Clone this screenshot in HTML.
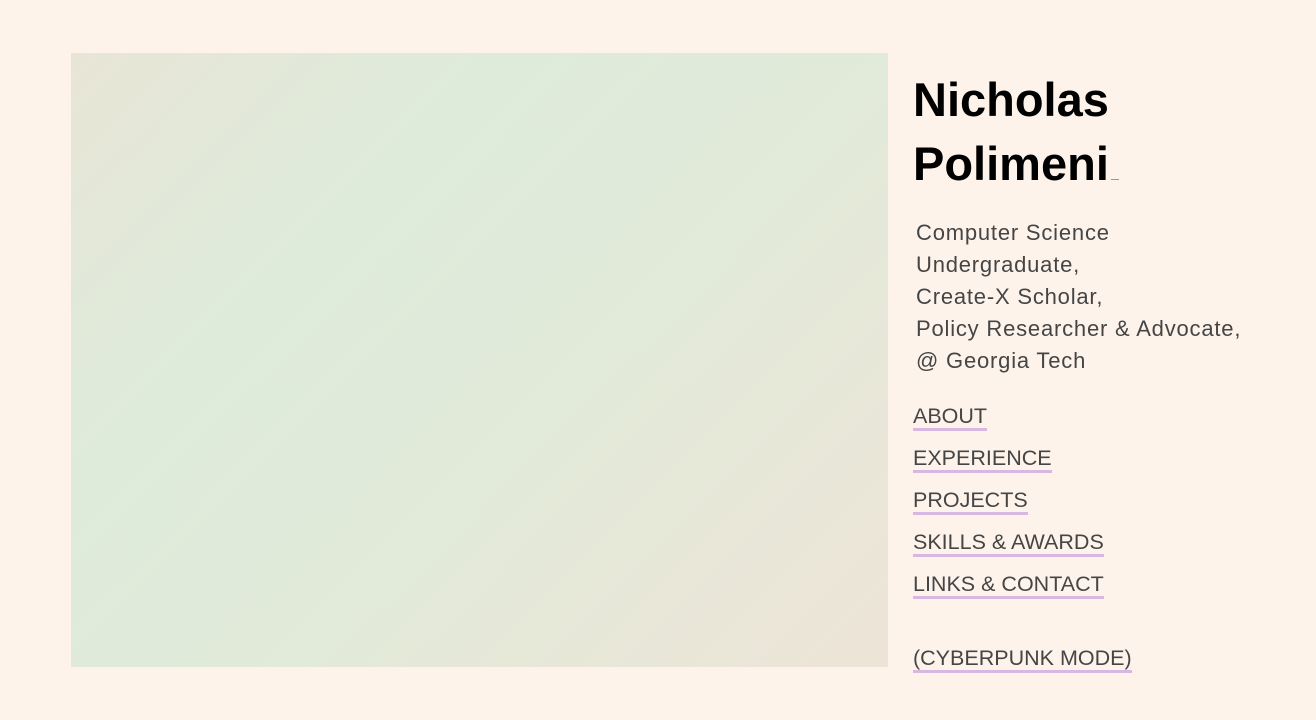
<!DOCTYPE html>
<html><head><meta charset="utf-8"><style>
html,body{margin:0;padding:0;}
body{width:1316px;height:720px;background:#fdf3eb;position:relative;overflow:hidden;font-family:"Liberation Sans",sans-serif;}
.img{position:absolute;left:71px;top:53px;width:817px;height:614px;background:linear-gradient(135deg,#e8e5d6 0%,#deebdb 30%,#e1ead9 55%,#ede4d7 100%);}
h1{position:absolute;left:913px;top:68px;margin:0;font-size:47px;line-height:64px;font-weight:bold;color:#000;}
h1 span{display:inline-block;width:8px;height:1px;background:#999;vertical-align:baseline;margin-left:2px}
.sub{position:absolute;left:916px;top:217px;font-size:22px;line-height:32px;color:#454545;letter-spacing:0.8px}
.nav a{position:absolute;left:913px;font-size:21.5px;line-height:24px;color:#454545;text-decoration:none;border-bottom:3px solid #d8b8e2;}
</style></head><body>
<div class="img"></div>
<h1>Nicholas<br>Polimeni<span></span></h1>
<div class="sub">Computer Science<br>Undergraduate,<br>Create-X Scholar,<br>Policy Researcher &amp; Advocate,<br>@ Georgia Tech</div>
<div class="nav">
<a style="top:404px">ABOUT</a>
<a style="top:446px">EXPERIENCE</a>
<a style="top:488px">PROJECTS</a>
<a style="top:530px">SKILLS &amp; AWARDS</a>
<a style="top:572px">LINKS &amp; CONTACT</a>
<a style="top:646px">(CYBERPUNK MODE)</a>
</div>
</body></html>
